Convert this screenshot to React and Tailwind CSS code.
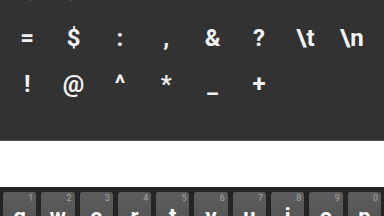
import React from "react";

const rows = [
  ["(", ")", "<", ">", "[", "]", ";", "#"],
  ["=", "$", ":", ",", "&", "?", "\\t", "\\n"],
  ["!", "@", "^", "*", "_", "+", "", ""],
];

const keys = [
  ["q", "1"], ["w", "2"], ["e", "3"], ["r", "4"], ["t", "5"],
  ["y", "6"], ["u", "7"], ["i", "8"], ["o", "9"], ["p", "0"],
];

export default function App() {
  return (
    <div
      className="w-[384px] h-[216px] overflow-hidden bg-white flex flex-col"
      style={{ fontFamily: "Roboto, 'Noto Sans', sans-serif" }}
    >
      <div className="h-[141px] shrink-0 bg-[#323232] border-b border-[#555555] overflow-hidden">
        <div className="mt-[-33px] pl-[4px] pr-[9px] grid grid-cols-8">
          {rows.map((row, ri) =>
            row.map((c, ci) => (
              <div
                key={ri + "-" + ci}
                className={
                  "h-[46px] leading-[46px] text-center text-[24px] font-bold text-[#f2f2f2]" +
                  (ri === 0 ? " -translate-y-[3px]" : " translate-y-[2px]")
                }
              >
                {c}
              </div>
            ))
          )}
        </div>
      </div>
      <div className="h-[46px] shrink-0 bg-white" />
      <div className="flex-1 bg-[#242424] pt-[5px] px-[3px] grid grid-cols-10 gap-[5px]">
        {keys.map(([l, n]) => (
          <div
            key={l}
            className="relative h-[40px] rounded-[3px] bg-gradient-to-b from-[#5e5e5e] to-[#4f4f4f] pt-[14px] text-center"
          >
            <span className="absolute right-[3px] top-[1px] text-[9px] leading-[10px] text-[#a8a8a8]">
              {n}
            </span>
            <span className="block text-[22px] leading-none font-bold text-white">{l}</span>
          </div>
        ))}
      </div>
    </div>
  );
}
